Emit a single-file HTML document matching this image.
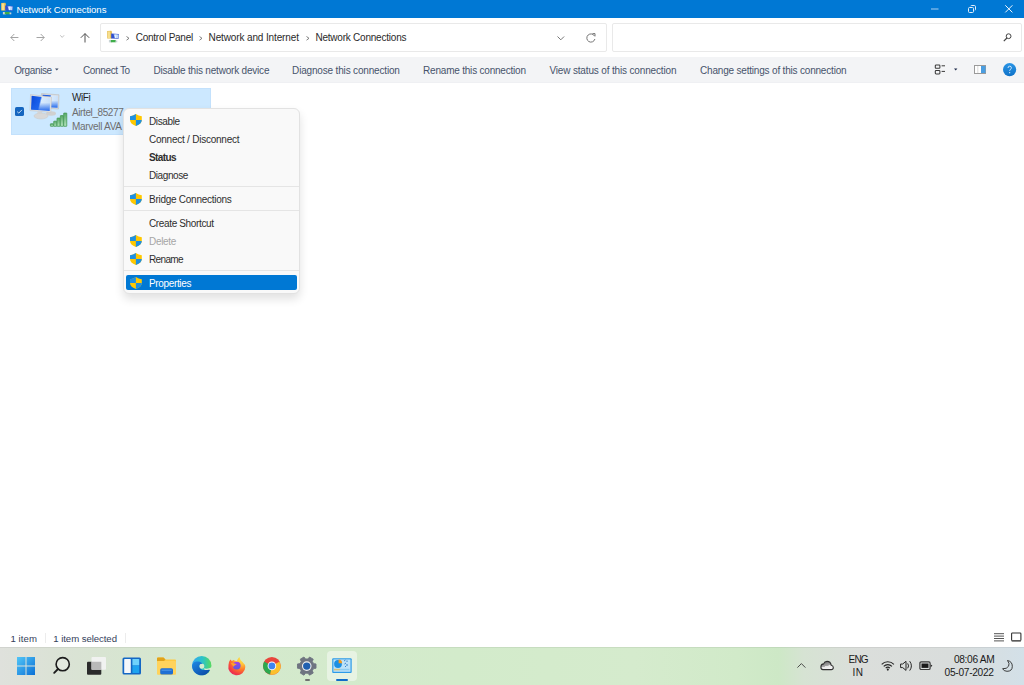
<!DOCTYPE html>
<html><head><meta charset="utf-8">
<style>
*{margin:0;padding:0;box-sizing:border-box}
html,body{width:1024px;height:685px;overflow:hidden;background:#fff;font-family:"Liberation Sans",sans-serif}
.t{position:absolute;white-space:nowrap;line-height:12px;font-size:10px}
svg{position:absolute;overflow:visible}
#title{position:absolute;left:0;top:0;width:1024px;height:18px;background:#0078d4}
.box{position:absolute;border:1px solid #e9e9e9;background:#fff;border-radius:2px}
#tool{position:absolute;left:0;top:57px;width:1024px;height:26px;background:#f3f4f6;border-bottom:1px solid #eff0f3}
.tb{top:65px;color:#47536b}
.bc{color:#2a2a2a}
#sel{position:absolute;left:11px;top:88px;width:200px;height:47px;background:#cce8ff;border:1px solid #c3e1fc}
#menu{position:absolute;left:123px;top:108px;width:177px;height:186px;background:#f9f9f9;border:1px solid #e2e2e2;border-radius:6px;box-shadow:0 5px 10px rgba(0,0,0,0.12)}
.mi{color:#2e2e2e}
.sep{position:absolute;left:124px;width:175px;height:1px;background:#e5e5e5}
#task{position:absolute;left:0;top:647px;width:1024px;height:38px;background:linear-gradient(90deg,#dfe1dc 0%,#dbe2d6 5%,#d8e4d2 10%,#d4e9cd 20%,#d3ebcb 45%,#d5ebcd 62%,#d1eac9 72%,#cde8c6 76%,#d6e3d3 78.5%,#dbdedb 84%,#d9dddc 93%,#d3e0e8 100%)}
#tasktop{position:absolute;left:0;top:647px;width:1024px;height:1px;background:rgba(0,0,0,0.06)}
.st{top:632.5px;color:#34405a;font-size:9.6px}
.tray{color:#1a1a1a;font-size:9.4px}
</style></head><body>
<!-- TITLE BAR -->
<div id="title"></div>
<svg style="left:0px;top:0px" width="16" height="16" viewBox="0 0 16 16">
 <path d="M1.2 3 L5.2 2.8 L5.9 3.5 V10.5 H1.2Z" fill="#e2b94e"/>
 <rect x="1.7" y="3.4" width="2.6" height="6.8" fill="#f7df8e"/>
 <path d="M5.2 5.6 L12.9 6 L12.6 10.8 L5.2 10.4Z" fill="#2f4fd0"/>
 <path d="M7.6 6.3 L12.6 6.5 L12.3 10.3 L8.8 10.1Z" fill="#bcd6f7"/>
 <path d="M9.3 6.5 L10.5 6.5 L9.8 10.2 L8.9 10.1Z" fill="#e8f2ff"/>
 <rect x="2.9" y="12" width="3" height="2.4" fill="#c9d4d6"/>
 <rect x="4.8" y="12" width="5" height="2.3" fill="#3fae4a"/>
 <rect x="9.6" y="12.5" width="1.7" height="1.8" fill="#c9d4d6"/>
</svg>
<div class="t" style="left:16.5px;top:4px;font-size:9.6px;letter-spacing:-0.07px;color:#fff">Network Connections</div>
<svg style="left:931px;top:8px" width="8" height="2"><rect x="0" y="0.5" width="7.5" height="1" fill="#a8cdf0"/></svg>
<svg style="left:968px;top:5px" width="8" height="8" viewBox="0 0 8 8"><rect x="0.5" y="2.5" width="5" height="5" rx="1" fill="none" stroke="#e3eefa" stroke-width="1"/><path d="M2.5 1.2 Q2.8 0.5 3.6 0.5 H6.3 Q7.5 0.5 7.5 1.7 V4.4 Q7.5 5.2 6.8 5.5" fill="none" stroke="#e3eefa" stroke-width="1"/></svg>
<svg style="left:1005px;top:5px" width="8" height="8" viewBox="0 0 8 8"><path d="M0.3 0.3 L7.4 7.4 M7.4 0.3 L0.3 7.4" stroke="#f0f6fc" stroke-width="1"/></svg>

<!-- NAV -->
<svg style="left:10.4px;top:33px" width="9" height="9" viewBox="0 0 9 9"><path d="M8.4 4.5 H0.8 M4.3 1 L0.8 4.5 L4.3 8" fill="none" stroke="#9a9a9a" stroke-width="0.9"/></svg>
<svg style="left:36px;top:33px" width="9" height="9" viewBox="0 0 9 9"><path d="M0.5 4.5 H8.2 M4.7 1 L8.2 4.5 L4.7 8" fill="none" stroke="#9a9a9a" stroke-width="0.9"/></svg>
<svg style="left:60px;top:35px" width="5" height="3" viewBox="0 0 5 3"><path d="M0.3 0.3 L2.2 2.4 L4.1 0.3" fill="none" stroke="#b0b0b0" stroke-width="0.8"/></svg>
<svg style="left:79.6px;top:33px" width="10" height="10" viewBox="0 0 10 10"><path d="M5 9.5 V0.6 M0.8 4.8 L5 0.6 L9.2 4.8" fill="none" stroke="#505050" stroke-width="1"/></svg>
<div class="box" style="left:100px;top:23px;width:507px;height:29px"></div>
<div class="box" style="left:612px;top:23px;width:410px;height:29px"></div>
<svg style="left:105.6px;top:27.7px" width="16" height="16" viewBox="0 0 16 16">
 <path d="M1.2 3 L5.2 2.8 L5.9 3.5 V10.5 H1.2Z" fill="#e2b94e"/>
 <rect x="1.7" y="3.4" width="2.6" height="6.8" fill="#f7df8e"/>
 <path d="M5.2 5.6 L12.9 6 L12.6 10.8 L5.2 10.4Z" fill="#2f4fd0"/>
 <path d="M7.6 6.3 L12.6 6.5 L12.3 10.3 L8.8 10.1Z" fill="#bcd6f7"/>
 <path d="M9.3 6.5 L10.5 6.5 L9.8 10.2 L8.9 10.1Z" fill="#e8f2ff"/>
 <rect x="2.9" y="12" width="3" height="2.4" fill="#c9d4d6"/>
 <rect x="4.8" y="12" width="5" height="2.3" fill="#3fae4a"/>
 <rect x="9.6" y="12.5" width="1.7" height="1.8" fill="#c9d4d6"/>
</svg>
<svg style="left:126px;top:36px" width="4" height="5" viewBox="0 0 4 5"><path d="M0.5 0.5 L3 2.3 L0.5 4.2" fill="none" stroke="#707070" stroke-width="0.9"/></svg>
<svg style="left:199px;top:36px" width="4" height="5" viewBox="0 0 4 5"><path d="M0.5 0.5 L3 2.3 L0.5 4.2" fill="none" stroke="#707070" stroke-width="0.9"/></svg>
<svg style="left:306px;top:36px" width="4" height="5" viewBox="0 0 4 5"><path d="M0.5 0.5 L3 2.3 L0.5 4.2" fill="none" stroke="#707070" stroke-width="0.9"/></svg>
<div class="t bc" style="left:135.8px;top:32.2px;letter-spacing:-0.27px">Control Panel</div>
<div class="t bc" style="left:208.6px;top:32.2px;letter-spacing:-0.13px">Network and Internet</div>
<div class="t bc" style="left:315.4px;top:32px;letter-spacing:-0.22px">Network Connections</div>
<svg style="left:557px;top:36px" width="8" height="5" viewBox="0 0 8 5"><path d="M0.5 0.5 L3.8 3.8 L7.1 0.5" fill="none" stroke="#666" stroke-width="0.9"/></svg>
<svg style="left:586px;top:33px" width="10" height="10" viewBox="0 0 10 10"><path d="M8.6 3.2 A4.1 4.1 0 1 0 8.9 6" fill="none" stroke="#666" stroke-width="0.9"/><path d="M6.5 0.6 L9 0.6 L9 3.3" fill="none" stroke="#666" stroke-width="0.9"/></svg>
<svg style="left:1003px;top:33px" width="9" height="9" viewBox="0 0 9 9"><circle cx="5.6" cy="3.2" r="2.4" fill="none" stroke="#444" stroke-width="1"/><path d="M3.9 5 L0.8 8.1" stroke="#444" stroke-width="1.2"/></svg>

<!-- TOOLBAR -->
<div id="tool"></div>
<div class="t tb" style="left:14.2px;letter-spacing:-0.37px">Organise</div>
<svg style="left:55px;top:68px" width="4" height="3"><path d="M0 0.5 H3.6 L1.8 2.5Z" fill="#3b4863"/></svg>
<div class="t tb" style="left:83px;letter-spacing:-0.36px">Connect To</div>
<div class="t tb" style="left:153.5px;letter-spacing:-0.2px">Disable this network device</div>
<div class="t tb" style="left:292.1px;letter-spacing:-0.17px">Diagnose this connection</div>
<div class="t tb" style="left:423.1px;letter-spacing:-0.21px">Rename this connection</div>
<div class="t tb" style="left:549.4px;letter-spacing:-0.155px">View status of this connection</div>
<div class="t tb" style="left:700px;letter-spacing:-0.19px">Change settings of this connection</div>
<svg style="left:934px;top:64px" width="12" height="11" viewBox="0 0 12 11"><rect x="1.3" y="0.9" width="4.6" height="3.4" rx="0.8" fill="none" stroke="#3a3a3a" stroke-width="1.05"/><rect x="1.3" y="6.5" width="4.6" height="3.4" rx="0.8" fill="none" stroke="#3a3a3a" stroke-width="1.05"/><path d="M7.6 1.8 H11 M7.6 7.4 H11" stroke="#3a3a3a" stroke-width="1"/></svg>
<svg style="left:954px;top:68px" width="4" height="3"><path d="M0 0.4 H3.4 L1.7 2.6Z" fill="#1e2a4a"/></svg>
<svg style="left:974px;top:65px" width="12" height="9" viewBox="0 0 12 9"><rect x="0.5" y="0.5" width="11" height="8" fill="#fff" stroke="#9a9a9a" stroke-width="1"/><rect x="7" y="1" width="4.5" height="7" fill="#4a9de0"/><path d="M3.8 1 V8" stroke="#d0d0d0" stroke-width="0.8"/></svg>
<svg style="left:1003px;top:63px" width="14" height="14" viewBox="0 0 14 14"><defs><linearGradient id="hg" x1="0" y1="0" x2="0" y2="1"><stop offset="0" stop-color="#2a95e6"/><stop offset="1" stop-color="#0f72c8"/></linearGradient></defs><circle cx="6.6" cy="6.6" r="6.6" fill="url(#hg)"/><path d="M5 5 Q5 3.2 6.7 3.2 Q8.4 3.2 8.4 4.8 Q8.4 5.8 7.4 6.4 Q6.7 6.8 6.7 7.8" fill="none" stroke="#eef6fd" stroke-width="0.85"/><circle cx="6.7" cy="9.7" r="0.6" fill="#eef6fd"/></svg>

<!-- ITEM -->
<div id="sel"></div>
<svg style="left:15px;top:107px" width="9" height="9" viewBox="0 0 9 9"><rect x="0" y="0" width="9" height="9" rx="1.6" fill="#1565bf"/><path d="M2.2 4.7 L3.8 6.1 L6.9 2.9" fill="none" stroke="#d8e8f8" stroke-width="0.9"/></svg>
<svg style="left:29px;top:92px" width="40" height="36" viewBox="0 0 40 36">
 <defs>
  <linearGradient id="scr" x1="0" y1="0" x2="1" y2="0.2"><stop offset="0" stop-color="#0d4ad8"/><stop offset="0.5" stop-color="#1a62ee"/><stop offset="0.58" stop-color="#d9ebfd"/><stop offset="1" stop-color="#c9e0fa"/></linearGradient><linearGradient id="scr2" x1="0" y1="0" x2="0" y2="1"><stop offset="0" stop-color="#1e64eb" stop-opacity="0"/><stop offset="0.45" stop-color="#1e64eb" stop-opacity="0"/><stop offset="1" stop-color="#1e64eb" stop-opacity="0.95"/></linearGradient>
  <linearGradient id="bar" x1="0" y1="0" x2="0" y2="1"><stop offset="0" stop-color="#58a866"/><stop offset="1" stop-color="#b3e4bd"/></linearGradient>
 </defs>
 <path d="M12.5 1.5 L30 2.8 L29.5 17 L12 16Z" fill="#dcdcdc" stroke="#bdbdbd" stroke-width="0.6"/>
 <path d="M13.5 2.7 L29 3.8 L28.6 15.8 L13.2 15Z" fill="url(#scr)"/><path d="M13.5 2.7 L29 3.8 L28.6 15.8 L13.2 15Z" fill="url(#scr2)"/>
 <ellipse cx="22" cy="21.5" rx="5" ry="2.2" fill="#d0d0d0"/>
 <path d="M1.5 2.5 L22.5 5 L21.8 20.3 L1 18.6Z" fill="#e4e4e4" stroke="#c4c4c4" stroke-width="0.6"/>
 <path d="M2.6 3.7 L21.3 6 L20.7 19 L2.1 17.5Z" fill="url(#scr)"/><path d="M2.6 3.7 L21.3 6 L20.7 19 L2.1 17.5Z" fill="url(#scr2)"/>
 <path d="M8 19.5 L13 20 L13.5 22.5 L9 22.2Z" fill="#d6d6d6"/>
 <ellipse cx="12" cy="24" rx="7" ry="3" fill="#d8d8d8" stroke="#c8c8c8" stroke-width="0.5"/>
 <g fill="url(#bar)" stroke="#469a57" stroke-width="0.8"><rect x="21.40" y="31.8" width="3.1" height="2.5" rx="0.3"/><rect x="24.72" y="29.2" width="3.1" height="5.1" rx="0.3"/><rect x="28.04" y="26.1" width="3.1" height="8.2" rx="0.3"/><rect x="31.36" y="23.6" width="3.1" height="10.7" rx="0.3"/><rect x="34.68" y="21.1" width="3.1" height="13.2" rx="0.3"/></g>
</svg>
<div class="t" style="left:72.1px;top:92px;letter-spacing:-0.45px;color:#1f1f1f">WiFi</div>
<div class="t" style="left:72px;top:107px;letter-spacing:-0.4px;color:#6e6e6e">Airtel_85277</div>
<div class="t" style="left:72px;top:121px;letter-spacing:-0.3px;color:#6e6e6e">Marvell AVA</div>

<!-- CONTEXT MENU -->
<div id="menu"></div>
<div class="t mi" style="left:149px;top:115.8px;letter-spacing:-0.37px">Disable</div>
<div class="t mi" style="left:149px;top:134px;letter-spacing:-0.24px">Connect / Disconnect</div>
<div class="t mi" style="left:149px;top:152px;letter-spacing:-0.6px;font-weight:bold">Status</div>
<div class="t mi" style="left:149px;top:170.2px;letter-spacing:-0.41px">Diagnose</div>
<div class="sep" style="top:186px"></div>
<div class="t mi" style="left:149px;top:194.1px;letter-spacing:-0.265px">Bridge Connections</div>
<div class="sep" style="top:210px"></div>
<div class="t mi" style="left:149px;top:217.8px;letter-spacing:-0.357px">Create Shortcut</div>
<div class="t mi" style="left:149px;top:236px;letter-spacing:-0.3px;color:#a6a6a6">Delete</div>
<div class="t mi" style="left:149px;top:253.9px;letter-spacing:-0.65px">Rename</div>
<div class="sep" style="top:270px"></div>
<div style="position:absolute;left:126px;top:275px;width:171px;height:15px;background:#0078d4;border-radius:2px"></div>
<div class="t mi" style="left:149px;top:277.7px;letter-spacing:-0.355px;color:#fff">Properties</div>
<svg style="left:130px;top:114px;width:0;height:0"><defs>
 <g id="sh"><path d="M5.9 0 Q8.5 1.8 11.8 2.2 V6 Q11.8 9.8 5.9 12 Q0 9.8 0 6 V2.2 Q3.3 1.8 5.9 0Z" fill="#ffc800"/><path d="M5.9 0 Q3.3 1.8 0 2.2 V6 H5.9Z" fill="#1e90e2"/><path d="M5.9 6 H11.8 Q11.8 9.8 5.9 12Z" fill="#1e90e2"/></g>
</defs></svg>
<svg style="left:130px;top:114px" width="12" height="12"><use href="#sh"/></svg>
<svg style="left:130px;top:193px" width="12" height="12"><use href="#sh"/></svg>
<svg style="left:130px;top:235px" width="12" height="12"><use href="#sh"/></svg>
<svg style="left:130px;top:253px" width="12" height="12"><use href="#sh"/></svg>
<svg style="left:130px;top:277px" width="12" height="12"><use href="#sh"/></svg>

<!-- STATUS BAR -->
<div class="t st" style="left:10.4px;letter-spacing:0.1px">1 item</div>
<div style="position:absolute;left:45px;top:633px;width:1px;height:10px;background:#ececec"></div>
<div class="t st" style="left:53.3px;letter-spacing:-0.06px">1 item selected</div>
<div style="position:absolute;left:125px;top:633px;width:1px;height:10px;background:#ececec"></div>
<svg style="left:994px;top:633px" width="10" height="9" viewBox="0 0 10 9"><path d="M0 0.7 H10 M0 3.1 H10 M0 5.5 H10 M0 7.9 H10" stroke="#555" stroke-width="1"/></svg>
<svg style="left:1011px;top:632px" width="11" height="11" viewBox="0 0 11 11"><rect x="0.6" y="1" width="9.3" height="7.6" rx="0.8" fill="#fff" stroke="#333" stroke-width="1.1"/><rect x="0.6" y="8.4" width="9.3" height="1.3" fill="#777"/></svg>

<!-- TASKBAR -->
<div id="task"></div>
<div id="tasktop"></div>
<svg style="left:17px;top:657px" width="18" height="18" viewBox="0 0 18 18"><defs><linearGradient id="wg" gradientUnits="userSpaceOnUse" x1="0" y1="0" x2="18" y2="18"><stop offset="0" stop-color="#52c6f7"/><stop offset="1" stop-color="#0a6fd6"/></linearGradient></defs><rect x="0" y="0" width="8.5" height="8.5" fill="url(#wg)"/><rect x="9.5" y="0" width="8.5" height="8.5" fill="url(#wg)"/><rect x="0" y="9.5" width="8.5" height="8.5" fill="url(#wg)"/><rect x="9.5" y="9.5" width="8.5" height="8.5" fill="url(#wg)"/></svg>
<svg style="left:53px;top:656px" width="18" height="19" viewBox="0 0 18 19"><circle cx="9.7" cy="8.2" r="6.6" fill="rgba(255,255,255,0.25)" stroke="#1c1c1c" stroke-width="1.6"/><path d="M5 13 L1.2 16.8" stroke="#1c1c1c" stroke-width="1.9" stroke-linecap="round"/></svg>
<svg style="left:87px;top:657px" width="20" height="19" viewBox="0 0 20 19"><rect x="0" y="4.8" width="14.3" height="13" rx="1" fill="#2b2b2b"/><rect x="4.5" y="0" width="14.5" height="12.8" rx="1" fill="#f2f2f2" opacity="0.95"/><rect x="4.5" y="4.8" width="9.8" height="8" fill="#b9b9b9"/></svg>
<svg style="left:122px;top:657px" width="20" height="18" viewBox="0 0 20 18"><rect x="0.5" y="0.5" width="18.5" height="17" rx="1.5" fill="#1467c4"/><rect x="2.2" y="2" width="6.6" height="14" rx="0.6" fill="#f5f7fa"/><rect x="10.4" y="2" width="6.8" height="6.5" rx="0.6" fill="#6fd2fb"/><rect x="10.4" y="8.5" width="6.8" height="7.5" rx="0.6" fill="#1ea3ef"/></svg>
<svg style="left:157px;top:657px" width="20" height="18" viewBox="0 0 20 18"><path d="M0 1.5 Q0 0.5 1 0.5 H6.5 L8.5 2.5 H18 Q19 2.5 19 3.5 V16.5 Q19 17.5 18 17.5 H1 Q0 17.5 0 16.5Z" fill="#ffca42"/><path d="M0 1.5 Q0 0.5 1 0.5 H6.5 L8.5 2.5 L7 4 H0Z" fill="#e0a21a"/><rect x="0" y="4" width="19" height="13.5" rx="1" fill="#ffd35c"/><rect x="3.2" y="11.3" width="12.8" height="6.2" rx="1.6" fill="#1f6fd4"/><rect x="4.5" y="12.6" width="10.2" height="1.2" fill="#4a95e8"/></svg>
<svg style="left:190px;top:654px" width="24" height="24" viewBox="0 0 24 24"><defs><linearGradient id="eg1" x1="0" y1="0" x2="1" y2="0"><stop offset="0" stop-color="#35a6f2"/><stop offset="0.55" stop-color="#2cc3c6"/><stop offset="1" stop-color="#58da5e"/></linearGradient><linearGradient id="eg2" x1="0" y1="0" x2="0.8" y2="1"><stop offset="0" stop-color="#1d8ae6"/><stop offset="1" stop-color="#0c4aa6"/></linearGradient></defs><circle cx="11.75" cy="11.65" r="9.7" fill="url(#eg1)"/><ellipse cx="11.8" cy="12.1" rx="2.5" ry="2.6" fill="#d6ebcf"/><path d="M13.5 14.2 C16 15 19.5 14.8 21.4 13.3 L21.8 16.5 C20 16 17 16.3 15 16.2Z" fill="#d6ebcf"/><path d="M2.05 12 C2.3 8.5 5 7.3 8 7.5 C10.5 7.7 12.3 9 12.8 10 C11.5 9.3 9.2 10 9.2 12.2 C9.2 14.7 12 16.3 15 16.1 C17 16 18.8 15.6 19.9 15.9 C18.5 19 15.2 21.35 11.75 21.35 C6.4 21.35 2.05 17 2.05 12Z" fill="url(#eg2)"/></svg>
<svg style="left:225px;top:654px" width="24" height="24" viewBox="0 0 24 24"><defs><radialGradient id="fg" cx="0.78" cy="0.08" r="1.1"><stop offset="0" stop-color="#ffe54a"/><stop offset="0.3" stop-color="#ffc23a"/><stop offset="0.55" stop-color="#ff7a2a"/><stop offset="0.8" stop-color="#f23a45"/><stop offset="1" stop-color="#e0206a"/></radialGradient><linearGradient id="fg2" x1="0.4" y1="0" x2="0.5" y2="1"><stop offset="0" stop-color="#a63cf0"/><stop offset="1" stop-color="#5260dc"/></linearGradient></defs><path d="M5.3 5.6 L6.9 7.1 L8.6 6.1 Q10 7.3 11.8 7.2 Q12.5 5 14.3 3 Q15 6 17.5 8 Q20.3 10.5 20.3 13 A8.5 8.5 0 1 1 3.5 11 Q3.6 8 5.3 5.6Z" fill="url(#fg)"/><circle cx="11.7" cy="11.6" r="3.95" fill="url(#fg2)"/><path d="M5.6 8.8 Q9 9.2 11.9 10.3 Q9.6 11 8.4 12.8 Q7 10.6 5.6 8.8Z" fill="#ffa22a"/></svg>
<svg style="left:263px;top:657px" width="18" height="18" viewBox="0 0 18 18"><circle cx="8.9" cy="8.9" r="8.9" fill="#e8453c"/><path d="M8.9 8.9 L1.2 4.5 A8.9 8.9 0 0 0 7.2 17.6Z" fill="#2da94f"/><path d="M8.9 8.9 L7.2 17.6 A8.9 8.9 0 0 0 17.8 8.9 L16.6 4.5Z" fill="#fbc02d"/><circle cx="8.9" cy="8.9" r="4.3" fill="#fff"/><circle cx="8.9" cy="8.9" r="3.4" fill="#3f84f0"/></svg>
<svg style="left:297px;top:656.5px" width="20" height="19" viewBox="0 0 20 19"><g transform="translate(9.75 9.1)"><path d="M6.24 -3.60 L6.77 -2.46 L9.26 -2.14 L9.26 2.14 L6.77 2.46 L6.24 3.60 L5.52 4.63 L6.48 6.95 L2.78 9.08 L1.25 7.09 L0.00 7.20 L-1.25 7.09 L-2.78 9.08 L-6.48 6.95 L-5.52 4.63 L-6.24 3.60 L-6.77 2.46 L-9.26 2.14 L-9.26 -2.14 L-6.77 -2.46 L-6.24 -3.60 L-5.52 -4.63 L-6.48 -6.95 L-2.78 -9.08 L-1.25 -7.09 L-0.00 -7.20 L1.25 -7.09 L2.78 -9.08 L6.48 -6.95 L5.52 -4.63Z" fill="#6e7480" stroke="#6e7480" stroke-width="0.9" stroke-linejoin="round"/><circle r="4.8" fill="#f0f0f0"/><circle r="3.7" fill="#1f5fb0"/></g></svg>
<div style="position:absolute;left:305px;top:679px;width:5px;height:1.8px;background:#707070;border-radius:1px"></div>
<div style="position:absolute;left:327px;top:651px;width:30px;height:30px;background:rgba(255,255,255,0.45);border-radius:4px"></div>
<svg style="left:332px;top:658px" width="20" height="15" viewBox="0 0 20 15"><rect x="0.2" y="0.2" width="19.5" height="14.8" rx="1" fill="#2d9be8"/><rect x="1.4" y="1.4" width="17.1" height="12.4" fill="#bde2f8"/><circle cx="6" cy="6" r="3.9" fill="#1b8fe4"/><path d="M6.6 1.5 A4 4 0 0 1 10.2 5.3 H6.6Z" fill="#f39a1e"/><path d="M12 3 L13.5 2 M15 2.5 V4 M12.5 6 L14 5 M15 6 V8 M13 9 L14 8" stroke="#2a78c8" stroke-width="0.9"/><rect x="2" y="10.8" width="6" height="1.6" fill="#d9c27a"/><rect x="8" y="10.8" width="9.5" height="1.6" fill="#8fcdf0"/></svg>
<div style="position:absolute;left:335.8px;top:678.6px;width:12.5px;height:2.3px;background:#0f6cc8;border-radius:1.2px"></div>

<svg style="left:797px;top:663px" width="9" height="5" viewBox="0 0 9 5"><path d="M0.4 4.6 L4.4 0.6 L8.4 4.6" fill="none" stroke="#3a3a3a" stroke-width="0.9"/></svg>
<svg style="left:820px;top:660px" width="15" height="11" viewBox="0 0 15 11"><defs><linearGradient id="cg" x1="0.1" y1="0" x2="0.5" y2="1"><stop offset="0" stop-color="#6a6a6a"/><stop offset="0.6" stop-color="#a8a8a8"/><stop offset="0.62" stop-color="#e6e6e6"/><stop offset="1" stop-color="#f6f6f6"/></linearGradient></defs><path d="M3 9.6 H11.2 Q13.3 9.6 13.3 7.5 Q13.3 5.5 11.2 5.2 Q10.6 1.4 7 1.4 Q4.6 1.4 3.6 3.9 Q0.9 4.2 0.9 6.9 Q0.9 9.6 3 9.6Z" fill="url(#cg)" stroke="#303030" stroke-width="1.1"/></svg>
<div class="t tray" style="left:848.6px;top:654.3px;font-size:10px;letter-spacing:-0.85px">ENG</div>
<div class="t tray" style="left:852.6px;top:667.2px;font-size:10px;letter-spacing:0.3px">IN</div>
<svg style="left:881px;top:660px" width="14" height="11" viewBox="0 0 14 11"><path d="M0.7 4.3 A8.6 8.6 0 0 1 12.9 4.3" fill="none" stroke="#262626" stroke-width="1.15"/><path d="M2.7 6.3 A5.8 5.8 0 0 1 10.9 6.3" fill="none" stroke="#262626" stroke-width="1.15"/><path d="M4.7 8.2 A3 3 0 0 1 8.9 8.2" fill="none" stroke="#262626" stroke-width="1.15"/><circle cx="6.8" cy="9.6" r="1.05" fill="#262626"/></svg>
<svg style="left:900px;top:660px" width="15" height="12" viewBox="0 0 15 12"><path d="M0.6 4 H2.7 L6 1.3 V10.4 L2.7 7.6 H0.6Z" fill="none" stroke="#262626" stroke-width="1" stroke-linejoin="round"/><path d="M7.7 3.4 Q9.4 5.85 7.7 8.3" fill="none" stroke="#262626" stroke-width="1"/><path d="M9.7 1.2 Q13.1 5.85 9.7 10.6" fill="none" stroke="#262626" stroke-width="1"/></svg>
<svg style="left:919px;top:661px" width="14" height="10" viewBox="0 0 14 10"><rect x="0.9" y="0.9" width="10.2" height="7.6" rx="1.3" fill="none" stroke="#3a3a3a" stroke-width="1.2"/><rect x="2.5" y="2.5" width="7" height="4.4" fill="#1a1a1a"/><path d="M11.8 3.5 L13.4 4.7 L11.8 5.9Z" fill="#1a1a1a"/></svg>
<div class="t tray" style="left:953.9px;top:653.7px;font-size:10.2px;letter-spacing:-0.33px">08:06 AM</div>
<div class="t tray" style="left:944.6px;top:667px;font-size:10.2px;letter-spacing:-0.3px">05-07-2022</div>
<svg style="left:1002px;top:660px" width="11" height="12" viewBox="0 0 11 12"><path d="M5.5 0.5 Q10.3 1.5 10.3 6.3 Q10.3 11.3 5 11.3 Q1.8 11.3 0.6 8.7 Q4.8 9.2 6.6 6.2 Q8 3.5 5.5 0.5Z" fill="none" stroke="#2a2a2a" stroke-width="0.9"/></svg>
</body></html>
